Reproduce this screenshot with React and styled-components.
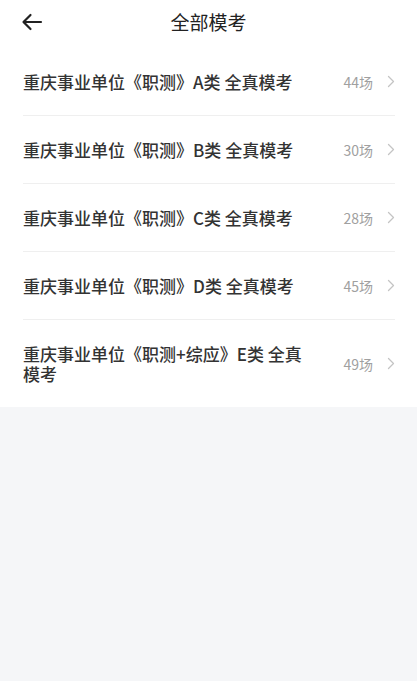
import React from 'react';
import styled, { createGlobalStyle } from 'styled-components';

const Global = createGlobalStyle`
  html, body {
    margin: 0;
    padding: 0;
    background: #f5f6f8;
    font-family: "Noto Sans CJK SC", "Noto Sans", sans-serif;
  }
`;

const Page = styled.div`
  width: 417px;
  min-height: 681px;
  background: #f5f6f8;
`;

const Header = styled.div`
  height: 42px;
  background: #fff;
  display: flex;
  align-items: center;
  justify-content: center;
  position: relative;
`;

const Back = styled.button`
  position: absolute;
  left: 20px;
  top: 11px;
  width: 24px;
  height: 22px;
  padding: 0;
  border: 0;
  background: none;
  display: flex;
  align-items: center;
  justify-content: center;
`;

const Title = styled.h1`
  margin: 0;
  font-size: 19px;
  font-weight: 400;
  color: #222;
  line-height: 1;
`;

const List = styled.div`
  background: #fff;
  padding: 6px 22px 0 23px;
`;

const Row = styled.div`
  display: flex;
  align-items: center;
  min-height: ${p => (p.$tall ? '87px' : '67px')};
  border-bottom: ${p => (p.$last ? 'none' : '1px solid #efefef')};
`;

const Name = styled.div`
  flex: 1;
  font-size: 17px;
  line-height: 20px;
  color: #333;
  font-weight: 500;
  padding-right: 30px;
`;

const Count = styled.span`
  font-size: 14px;
  color: #a0a0a0;
  margin-right: 14px;
`;

const exams = [
  { name: '重庆事业单位《职测》A类 全真模考', count: 44 },
  { name: '重庆事业单位《职测》B类 全真模考', count: 30 },
  { name: '重庆事业单位《职测》C类 全真模考', count: 28 },
  { name: '重庆事业单位《职测》D类 全真模考', count: 45 },
  { name: '重庆事业单位《职测+综应》E类 全真模考', count: 49, tall: true },
];

function Chevron() {
  return (
    <svg width="8" height="13" viewBox="0 0 8 13" fill="none">
      <path d="M1.5 1.5l5 5-5 5" stroke="#c4c4c4" strokeWidth="1.3" strokeLinecap="round" strokeLinejoin="round" />
    </svg>
  );
}

export default function App() {
  return (
    <Page>
      <Global />
      <Header>
        <Back aria-label="返回">
          <svg width="22" height="18" viewBox="0 0 22 18" fill="none">
            <path d="M20 9H3M9.5 2L2.5 9l7 7" stroke="#222" strokeWidth="2.2" strokeLinecap="round" strokeLinejoin="round" />
          </svg>
        </Back>
        <Title>全部模考</Title>
      </Header>
      <List>
        {exams.map((e, i) => (
          <Row key={i} $tall={e.tall} $last={i === exams.length - 1}>
            <Name>{e.name}</Name>
            <Count>{e.count}场</Count>
            <Chevron />
          </Row>
        ))}
      </List>
    </Page>
  );
}
